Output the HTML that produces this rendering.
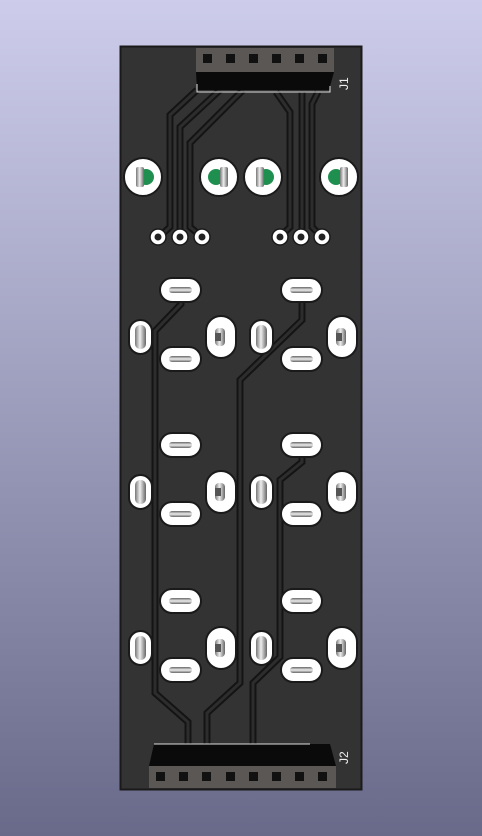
<!DOCTYPE html>
<html><head><style>
html,body{margin:0;padding:0;}
body{width:482px;height:836px;overflow:hidden;background:linear-gradient(#cdcdeb,#69698a);}
svg{display:block}
</style></head><body>
<svg width="482" height="836" viewBox="0 0 482 836" xmlns="http://www.w3.org/2000/svg">
<defs>
<linearGradient id="m" x1="0" x2="1"><stop offset="0" stop-color="#777"/><stop offset="0.45" stop-color="#eee"/><stop offset="1" stop-color="#666"/></linearGradient>
<linearGradient id="mv" x1="0" y1="0" x2="0" y2="1"><stop offset="0" stop-color="#666"/><stop offset="0.5" stop-color="#eee"/><stop offset="1" stop-color="#666"/></linearGradient>
</defs>
<rect x="120.5" y="46.5" width="241" height="743" fill="#333" stroke="#1a1a1a" stroke-width="2"/>
<g fill="none" stroke-linejoin="miter">
<g stroke="#141414" stroke-width="7">
<polyline points="197,90 170,115 170,227 159,237"/>
<polyline points="220,90 180,127 180,237"/>
<polyline points="243,90 190,143 190,227 202,237"/>
<polyline points="276,92 290,112 290,227 280,237"/>
<polyline points="302,92 302,237"/>
<polyline points="318,92 312,104 312,227 322,237"/>
<polyline points="181,298 181,304 155,331 155,693 188,722 188,745"/>
<polyline points="302,298 302,320 240,380 240,683 207,713 207,745"/>
<polyline points="302,455 302,462 280,480 280,657 253,683 253,745"/>
</g>
<g stroke="#2d2d2d" stroke-width="3">
<polyline points="197,90 170,115 170,227 159,237"/>
<polyline points="220,90 180,127 180,237"/>
<polyline points="243,90 190,143 190,227 202,237"/>
<polyline points="276,92 290,112 290,227 280,237"/>
<polyline points="302,92 302,237"/>
<polyline points="318,92 312,104 312,227 322,237"/>
<polyline points="181,298 181,304 155,331 155,693 188,722 188,745"/>
<polyline points="302,298 302,320 240,380 240,683 207,713 207,745"/>
<polyline points="302,455 302,462 280,480 280,657 253,683 253,745"/>
</g>
</g>
<!-- J1 -->
<rect x="196" y="48" width="138" height="24" fill="#5b5755"/>
<g fill="#111"><rect x="203" y="54" width="9" height="9"/><rect x="226" y="54" width="9" height="9"/><rect x="249" y="54" width="9" height="9"/><rect x="272" y="54" width="9" height="9"/><rect x="295" y="54" width="9" height="9"/><rect x="318" y="54" width="9" height="9"/></g>
<polygon points="196,72 334,72 329,90 197,90" fill="#0a0a0a"/>
<polyline points="197,84 197,92 330,92 330,86" fill="none" stroke="#ddd" stroke-width="1"/>
<text x="0" y="0" transform="translate(348,90) rotate(-90)" font-family="Liberation Sans,sans-serif" font-size="12" fill="#eee">J1</text>
<!-- J2 -->
<polygon points="154,744 330,744 336,766 149,766" fill="#0a0a0a"/>
<line x1="154" y1="744" x2="310" y2="744" stroke="#ddd" stroke-width="1"/>
<rect x="149" y="766" width="187" height="22" fill="#5b5755"/>
<g fill="#111"><rect x="156" y="772" width="9" height="9"/><rect x="179" y="772" width="9" height="9"/><rect x="202" y="772" width="9" height="9"/><rect x="226" y="772" width="9" height="9"/><rect x="249" y="772" width="9" height="9"/><rect x="272" y="772" width="9" height="9"/><rect x="295" y="772" width="9" height="9"/><rect x="318" y="772" width="9" height="9"/></g>
<text x="0" y="0" transform="translate(348,764) rotate(-90)" font-family="Liberation Sans,sans-serif" font-size="12" fill="#eee">J2</text>
<!-- big round pads -->
<g>
<circle cx="143" cy="177" r="19" fill="#fff" stroke="#1a1a1a" stroke-width="2"/><circle cx="146" cy="177" r="8" fill="#1f8f50"/><rect x="136" y="167" width="8" height="20" rx="2" fill="url(#m)"/>
<circle cx="219" cy="177" r="19" fill="#fff" stroke="#1a1a1a" stroke-width="2"/><circle cx="216" cy="177" r="8" fill="#1f8f50"/><rect x="220" y="167" width="8" height="20" rx="2" fill="url(#m)"/>
<circle cx="263" cy="177" r="19" fill="#fff" stroke="#1a1a1a" stroke-width="2"/><circle cx="266" cy="177" r="8" fill="#1f8f50"/><rect x="256" y="167" width="8" height="20" rx="2" fill="url(#m)"/>
<circle cx="339" cy="177" r="19" fill="#fff" stroke="#1a1a1a" stroke-width="2"/><circle cx="336" cy="177" r="8" fill="#1f8f50"/><rect x="340" y="167" width="8" height="20" rx="2" fill="url(#m)"/>
</g>
<!-- vias -->
<g fill="#fff" stroke="#1a1a1a" stroke-width="1.5">
<circle cx="158" cy="237" r="8"/><circle cx="180" cy="237" r="8"/><circle cx="202" cy="237" r="8"/>
<circle cx="280" cy="237" r="8"/><circle cx="301" cy="237" r="8"/><circle cx="322" cy="237" r="8"/>
</g>
<g fill="#222"><circle cx="158" cy="237" r="3.5"/><circle cx="180" cy="237" r="3.5"/><circle cx="202" cy="237" r="3.5"/><circle cx="280" cy="237" r="3.5"/><circle cx="301" cy="237" r="3.5"/><circle cx="322" cy="237" r="3.5"/></g>
<!-- pad sets -->
<g id="set">
<rect x="160" y="278" width="41" height="24" rx="12" fill="#fff" stroke="#1a1a1a" stroke-width="2"/>
<rect x="169" y="287" width="23" height="6" rx="3" fill="url(#mv)"/>
<rect x="160" y="347" width="41" height="24" rx="12" fill="#fff" stroke="#1a1a1a" stroke-width="2"/>
<rect x="169" y="356" width="23" height="6" rx="3" fill="url(#mv)"/>
<rect x="129" y="320" width="23" height="34" rx="11.5" fill="#fff" stroke="#1a1a1a" stroke-width="2"/>
<rect x="135" y="325" width="11" height="24" rx="5" fill="url(#m)"/>
<rect x="206" y="316" width="30" height="42" rx="15" fill="#fff" stroke="#1a1a1a" stroke-width="2"/>
<rect x="215" y="328" width="10" height="18" rx="4" fill="url(#m)"/>
<rect x="215" y="333" width="6" height="8" fill="#555"/>
</g>
<use href="#set" x="121" y="0"/>
<use href="#set" x="0" y="155"/>
<use href="#set" x="121" y="155"/>
<use href="#set" x="0" y="311"/>
<use href="#set" x="121" y="311"/>
</svg>
</body></html>
